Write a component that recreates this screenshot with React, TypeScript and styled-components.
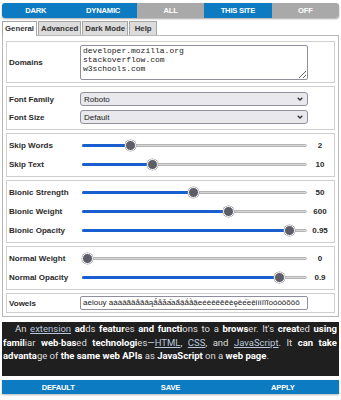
import React from 'react';
import styled, { createGlobalStyle } from 'styled-components';

const GlobalStyle = createGlobalStyle`
    body {
        margin: 0;
        background: #fff;
        font-family: "Liberation Sans", Arial, sans-serif;
    }
`;

const Page = styled.div`
    width: 337px;
    padding: 3px 2px;
`;

const ModeBar = styled.div`
    display: flex;
    height: 15px;
    border-radius: 3px;
    overflow: hidden;
    box-shadow: 0 1px 2px rgba(0, 0, 0, 0.35);
`;

const BarButton = styled.div<{ $on?: boolean }>`
    flex: 1;
    display: flex;
    align-items: center;
    justify-content: center;
    background: ${p => (p.$on ? '#0d7bc1' : '#a9a9a9')};
    color: #fff;
    font: bold 7.6px "Liberation Sans", Arial, sans-serif;
    letter-spacing: -0.2px;
`;

const TabRow = styled.div`
    display: flex;
    gap: 1px;
    margin-top: 3px;
    height: 14px;
    position: relative;
    z-index: 1;
`;

const Tab = styled.div<{ $active?: boolean }>`
    min-width: 28px;
    padding: 0 2px;
    height: ${p => (p.$active ? '15px' : '14px')};
    border: 1px solid #a6a6a6;
    border-bottom: none;
    background: ${p => (p.$active ? '#fff' : '#dcdcdc')};
    color: #333;
    font: bold 7.8px "Liberation Sans", Arial, sans-serif;
    line-height: 13px;
    text-align: center;
    box-sizing: border-box;
`;

const Panel = styled.div`
    border: 1px solid #b8b8b8;
    padding: 5px 3px 3px;
    display: flex;
    flex-direction: column;
    gap: 3px;
`;

const Section = styled.div<{ $pad?: string; $gap?: number }>`
    border: 1px solid #cfcfcf;
    padding: ${p => p.$pad || '2px'};
    display: grid;
    grid-template-columns: 71px 228px 1fr;
    row-gap: ${p => p.$gap || 0}px;
    align-items: center;
`;

const Label = styled.div`
    font: bold 8px "Liberation Sans", Arial, sans-serif;
    color: #2a2a2a;
`;

const Domains = styled.textarea`
    grid-column: 2;
    height: 35px;
    box-sizing: border-box;
    margin: 0;
    padding: 1px 2px;
    border: 1px solid #8f8f9d;
    border-radius: 2px;
    font: 8px/8.8px "Liberation Mono", "DejaVu Sans Mono", monospace;
    color: #222;
    resize: vertical;
    overflow: hidden;
`;

const Select = styled.div`
    grid-column: 2;
    height: 14px;
    box-sizing: border-box;
    border: 1px solid #8f8f9d;
    border-radius: 3px;
    background: #e9e9ed;
    display: flex;
    align-items: center;
    justify-content: space-between;
    padding: 0 4px 0 3px;
    font: 8px "Liberation Sans", Arial, sans-serif;
    color: #222;
`;

const TextInput = styled.div`
    grid-column: 2;
    height: 14px;
    box-sizing: border-box;
    border: 1px solid #8f8f9d;
    border-radius: 2px;
    padding: 0 2px;
    font: 8px/12px "Liberation Sans", Arial, sans-serif;
    color: #222;
    white-space: nowrap;
    overflow: hidden;
`;

const SliderRow = styled.div`
    display: contents;
`;

const Track = styled.div`
    position: relative;
    height: 19px;
    margin: 0 1px 0 2px;
`;

const Rail = styled.div`
    position: absolute;
    left: 0;
    right: 0;
    top: 8px;
    height: 3px;
    box-sizing: border-box;
    border: 1px solid #b4b4b4;
    background: #d6d6d6;
    border-radius: 2px;
`;

const Fill = styled.div`
    position: absolute;
    left: 0;
    top: 8px;
    height: 3px;
    background: #1a5fd0;
    border-radius: 2px;
`;

const Thumb = styled.div`
    position: absolute;
    top: 4px;
    width: 11px;
    height: 11px;
    margin-left: -5.5px;
    box-sizing: border-box;
    border-radius: 50%;
    background: #5d5d68;
    border: 1px solid #fff;
    box-shadow: 0 0 0 0.5px #9a9aa4;
`;

const Value = styled.div`
    text-align: center;
    font: bold 8px "Liberation Sans", Arial, sans-serif;
    color: #2a2a2a;
`;

const Preview = styled.div`
    margin-top: 5px;
    height: 54px;
    box-sizing: border-box;
    background: #1f1f1f;
    padding: 0 2px 0 1px;
    font: 9.5px/13.5px Roboto, "Liberation Sans", sans-serif;
    color: #dedede;
    text-align: justify;
    text-indent: 12px;
`;

const Strong = styled.b`
    color: #fff;
    font-weight: bold;
`;

const Link = styled.span`
    color: #b8c6de;
    text-decoration: underline;
`;

const ActionBar = styled.div`
    display: flex;
    height: 14px;
    margin-top: 4px;
    box-shadow: 0 1px 2px rgba(0, 0, 0, 0.3);
`;

const Chevron = () => (
    <svg width="6" height="4" viewBox="0 0 6 4">
        <path d="M0.7 0.7 L3 3 L5.3 0.7" fill="none" stroke="#333" strokeWidth="1.3" />
    </svg>
);

const modes = [
    { name: 'DARK', on: true },
    { name: 'DYNAMIC', on: true },
    { name: 'ALL', on: false },
    { name: 'THIS SITE', on: true },
    { name: 'OFF', on: false },
];

const tabs = ['General', 'Advanced', 'Dark Mode', 'Help'];

type SliderDef = { label: string; value: string; at: number };

const sliderGroups: SliderDef[][] = [
    [
        { label: 'Skip Words', value: '2', at: 0.2 },
        { label: 'Skip Text', value: '10', at: 0.306 },
    ],
    [
        { label: 'Bionic Strength', value: '50', at: 0.493 },
        { label: 'Bionic Weight', value: '600', at: 0.661 },
        { label: 'Bionic Opacity', value: '0.95', at: 0.946 },
    ],
    [
        { label: 'Normal Weight', value: '0', at: 0 },
        { label: 'Normal Opacity', value: '0.9', at: 0.895 },
    ],
];

// trimmed so the visible run ends inside the field
const vowels = 'aeiouy aáàâãäåāăąǻǟǡấầẩậắằặeéèêëēĕėęěếềệiíìîïĩoóòôõöō';

const sample =
    "An [extension] **ad**ds **featur**es **and** **functi**ons to a **brows**er. It's **creat**ed **using** " +
    '**famil**iar **web**-**bas**ed **technologi**es—[HTML], [CSS], and [JavaScript]. It **can** **take** ' +
    '**advanta**ge of **the** **same** **web** **APIs** as **JavaScript** on a **web** **page**.';

const renderSample = (text: string) =>
    text.split(/(\*\*[^*]+\*\*|\[[^\]]+\])/).map((part, i) => {
        if (part.startsWith('**')) return <Strong key={i}>{part.slice(2, -2)}</Strong>;
        if (part.startsWith('[')) return <Link key={i}>{part.slice(1, -1)}</Link>;
        return <React.Fragment key={i}>{part}</React.Fragment>;
    });

const Slider: React.FC<{ at: number }> = ({ at }) => {
    const pos = `calc(5.5px + ${at} * (100% - 11px))`;
    return (
        <Track>
            <Rail />
            <Fill style={{ width: pos }} />
            <Thumb style={{ left: pos }} />
        </Track>
    );
};

const App: React.FC = () => {
    return (
        <React.Fragment>
            <GlobalStyle />
            <Page>
                <ModeBar>
                    {modes.map(m => (
                        <BarButton key={m.name} $on={m.on}>{m.name}</BarButton>
                    ))}
                </ModeBar>
                <TabRow>
                    {tabs.map((t, i) => (
                        <Tab key={t} $active={i === 0}>{t}</Tab>
                    ))}
                </TabRow>
                <Panel>
                    <Section $pad="3px 2px 2px">
                        <Label>Domains</Label>
                        <Domains
                            readOnly
                            value={'developer.mozilla.org\nstackoverflow.com\nw3schools.com'}
                        />
                    </Section>
                    <Section $pad="5px 2px" $gap={4}>
                        <Label>Font Family</Label>
                        <Select>Roboto<Chevron /></Select>
                        <div />
                        <Label>Font Size</Label>
                        <Select>Default<Chevron /></Select>
                        <div />
                    </Section>
                    {sliderGroups.map((group, gi) => (
                        <Section key={gi}>
                            {group.map(s => (
                                <SliderRow key={s.label}>
                                    <Label>{s.label}</Label>
                                    <Slider at={s.at} />
                                    <Value>{s.value}</Value>
                                </SliderRow>
                            ))}
                        </Section>
                    ))}
                    <Section>
                        <Label>Vowels</Label>
                        <TextInput>{vowels}</TextInput>
                    </Section>
                </Panel>
                <Preview>{renderSample(sample)}</Preview>
                <ActionBar>
                    <BarButton $on>DEFAULT</BarButton>
                    <BarButton $on>SAVE</BarButton>
                    <BarButton $on>APPLY</BarButton>
                </ActionBar>
            </Page>
        </React.Fragment>
    );
};

export default App;
